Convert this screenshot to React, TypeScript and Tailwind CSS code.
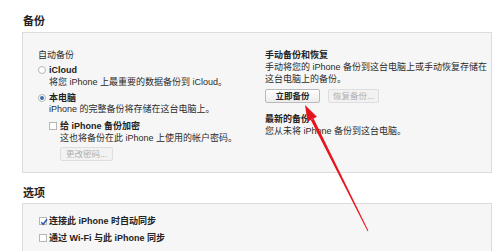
import React from 'react';

const font = { fontFamily: '"Liberation Sans", "Noto Sans CJK SC", sans-serif' };

function Radio({ checked }: { checked?: boolean }) {
  return (
    <span className="grid h-[8px] w-[8px] shrink-0 place-items-center rounded-full border border-[#b5b5b5] bg-white">
      {checked && <span className="h-[4px] w-[4px] rounded-full bg-[#3d6fb0]" />}
    </span>
  );
}

function Check({ checked }: { checked?: boolean }) {
  return (
    <span className="grid h-[8px] w-[8px] shrink-0 place-items-center border border-[#b5b5b5] bg-white">
      {checked && (
        <svg viewBox="0 0 8 8" className="h-[8px] w-[8px]">
          <path d="M1.2 4.2 L3.2 6.2 L7 1.2" fill="none" stroke="#2f5fa8" strokeWidth="1.6" />
        </svg>
      )}
    </span>
  );
}

function Btn({ children, disabled, w }: { children: React.ReactNode; disabled?: boolean; w: string }) {
  return (
    <span
      className={
        'flex h-[14px] items-center justify-center rounded-[2px] border text-[8.5px] ' +
        w +
        (disabled
          ? ' border-[#dedede] bg-[#f2f2f2] text-[#b0b0b0]'
          : ' border-[#b9b9b9] bg-gradient-to-b from-white to-[#ececec] font-bold text-[#222]')
      }
    >
      {children}
    </span>
  );
}

export default function App() {
  return (
    <div className="relative h-[251px] w-[500px] overflow-hidden bg-white text-[#2a2a2a]" style={font}>
      {/* 备份 */}
      <div className="pl-[23px] pt-[14px] text-[11px] font-bold leading-[14px] text-[#222]">备份</div>
      <div className="ml-[22px] mt-[4px] flex h-[141px] w-[470px] border border-[#dcdcdc] bg-[#f6f6f6] pl-[15px] pt-[16px] text-[9px] leading-[12px]">
        {/* 自动备份 */}
        <div className="w-[227px]">
          <div>自动备份</div>
          <div className="mt-[3px] flex items-center gap-[3px]">
            <Radio />
            <span className="font-bold text-[#222]">iCloud</span>
          </div>
          <div className="pl-[11px]">将您 iPhone 上最重要的数据备份到 iCloud。</div>
          <div className="mt-[4px] flex items-center gap-[3px]">
            <Radio checked />
            <span className="font-bold text-[#222]">本电脑</span>
          </div>
          <div className="pl-[11px] leading-[11px]">iPhone 的完整备份将存储在这台电脑上。</div>
          <div className="mt-[5px] flex items-center gap-[3px] pl-[11px]">
            <Check />
            <span className="font-bold text-[#222]">给 iPhone 备份加密</span>
          </div>
          <div className="pl-[22px]">这也将备份在此 iPhone 上使用的帐户密码。</div>
          <div className="mt-[3px] pl-[22px]">
            <Btn disabled w="w-[53px]">更改密码...</Btn>
          </div>
        </div>
        {/* 手动备份和恢复 */}
        <div className="w-[225px]">
          <div className="font-bold text-[#222]">手动备份和恢复</div>
          <div>
            手动将您的 iPhone 备份到这台电脑上或手动恢复存储在
            <br />
            这台电脑上的备份。
          </div>
          <div className="mt-[4px] flex gap-[8px]">
            <Btn w="w-[55px]">立即备份</Btn>
            <Btn disabled w="w-[51px]">恢复备份...</Btn>
          </div>
          <div className="mt-[10px] font-bold text-[#222]">最新的备份</div>
          <div>您从未将 iPhone 备份到这台电脑。</div>
        </div>
      </div>

      {/* 选项 */}
      <div className="pl-[23px] pt-[13px] text-[11px] font-bold leading-[14px] text-[#222]">选项</div>
      <div className="ml-[22px] mt-[3px] h-[60px] w-[470px] border border-[#dcdcdc] bg-[#f6f6f6] pl-[16px] pt-[11px] text-[9px] leading-[12px]">
        <div className="flex items-center gap-[2px]">
          <Check checked />
          <span className="font-bold text-[#222]">连接此 iPhone 时自动同步</span>
        </div>
        <div className="mt-[5px] flex items-center gap-[2px]">
          <Check />
          <span className="font-bold text-[#222]">通过 Wi-Fi 与此 iPhone 同步</span>
        </div>
      </div>

      {/* 红色箭头 */}
      <svg className="pointer-events-none absolute left-0 top-0 h-[251px] w-[500px]" viewBox="0 0 500 251">
        <polygon points="313.6,118.4 310.8,120 367.6,231.2 368.4,230.8" fill="#e8141c" />
        <polygon points="305,105 316.9,116.8 307.5,121.8" fill="#e8141c" />
      </svg>
    </div>
  );
}
